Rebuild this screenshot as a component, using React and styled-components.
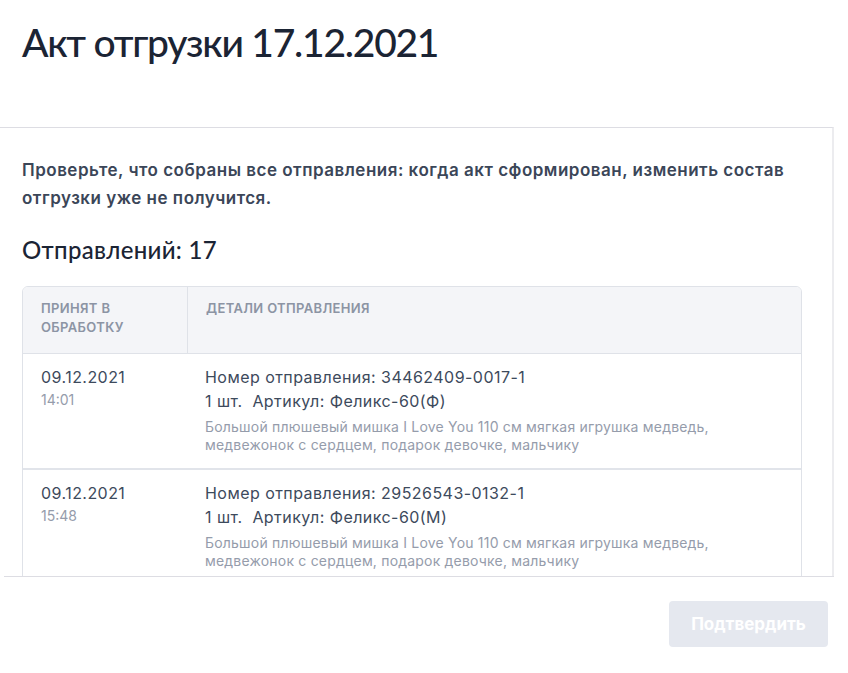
import React from "react";
import styled, { createGlobalStyle } from "styled-components";

const GlobalStyle = createGlobalStyle`
  html, body {
    margin: 0;
    padding: 0;
    background: #ffffff;
  }
  body {
    font-family: Inter, "Noto Sans", sans-serif;
    color: #3b4658;
  }
`;

const Page = styled.div`
  width: 848px;
  height: 673px;
  overflow: hidden;
  background: #fff;
`;

const Header = styled.div`
  padding: 18px 22px 0;
  height: 127px;
  box-sizing: border-box;
`;

const Title = styled.h1`
  margin: 0;
  font-family: Lato, "Noto Sans", sans-serif;
  font-weight: 500;
  font-size: 39px;
  line-height: 48px;
  color: #1b2434;
  letter-spacing: -1.25px;
`;

const ScrollBox = styled.div`
  width: 834px;
  height: 449px;
  box-sizing: border-box;
  border-top: 1px solid #dddde3;
  border-right: 2px solid #ececef;
  padding: 28px 30px 0 22px;
  overflow: hidden;
`;

const Notice = styled.p`
  margin: 0;
  font-size: 17px;
  font-weight: 600;
  line-height: 28px;
  letter-spacing: 0.5px;
  color: #3b4658;
`;

const Count = styled.h2`
  margin: 22px 0 20px;
  font-family: Lato, "Noto Sans", sans-serif;
  font-weight: 500;
  font-size: 24px;
  line-height: 32px;
  letter-spacing: 0.3px;
  color: #1b2434;
`;

const Table = styled.div`
  border: 1px solid #dfe2e8;
  border-radius: 6px;
  overflow: hidden;
`;

const Row = styled.div`
  display: grid;
  grid-template-columns: 164px 1fr;
  border-bottom: 2px solid #e1e4ea;
`;

const HeadRow = styled(Row)`
  background: #f4f5f8;
  border-bottom: 1px solid #dfe2e8;
`;

const HeadCell = styled.div`
  padding: 12px 18px 16px;
  font-size: 13px;
  font-weight: 600;
  line-height: 19px;
  letter-spacing: 0.35px;
  text-transform: uppercase;
  color: #8c94a4;
  border-left: ${({ divided }) => (divided ? "1px solid #dfe2e8" : "none")};
`;

const Cell = styled.div`
  padding: 11px 18px 14px;
`;

const Main = styled.div`
  font-size: 16px;
  line-height: 24px;
  letter-spacing: 0.45px;
  color: #3d4a5c;
`;

const Time = styled.div`
  font-size: 14px;
  line-height: 22px;
  color: #959cab;
`;

const Desc = styled.div`
  margin-top: 5px;
  font-size: 14px;
  line-height: 18px;
  letter-spacing: 0.2px;
  color: #959cab;
`;

const Footer = styled.div`
  margin: 0 14px 0 4px;
  border-top: 1px solid #dddde3;
  display: flex;
  justify-content: flex-end;
  padding: 24px 6px 0 0;
`;

const Button = styled.button`
  width: 159px;
  height: 46px;
  border: none;
  border-radius: 4px;
  background: #e5e8ef;
  color: #ffffff;
  font-family: Inter, "Noto Sans", sans-serif;
  font-size: 17px;
  font-weight: 700;
  cursor: default;
`;

const shipments = [
  {
    date: "09.12.2021",
    time: "14:01",
    number: "34462409-0017-1",
    article: "Феликс-60(Ф)",
    desc: "Большой плюшевый мишка I Love You 110 см мягкая игрушка медведь, медвежонок с сердцем, подарок девочке, мальчику",
  },
  {
    date: "09.12.2021",
    time: "15:48",
    number: "29526543-0132-1",
    article: "Феликс-60(М)",
    desc: "Большой плюшевый мишка I Love You 110 см мягкая игрушка медведь, медвежонок с сердцем, подарок девочке, мальчику",
  },
];

export default function App() {
  return (
    <Page>
      <GlobalStyle />
      <Header>
        <Title>Акт отгрузки 17.12.2021</Title>
      </Header>
      <ScrollBox>
        <Notice>
          Проверьте, что собраны все отправления: когда акт сформирован, изменить состав
          отгрузки уже не получится.
        </Notice>
        <Count>Отправлений: 17</Count>
        <Table>
          <HeadRow>
            <HeadCell>Принят в обработку</HeadCell>
            <HeadCell divided>Детали отправления</HeadCell>
          </HeadRow>
          {shipments.map((s) => (
            <Row key={s.number}>
              <Cell>
                <Main>{s.date}</Main>
                <Time>{s.time}</Time>
              </Cell>
              <Cell>
                <Main>Номер отправления: {s.number}</Main>
                <Main>1 шт.&nbsp; Артикул: {s.article}</Main>
                <Desc>{s.desc}</Desc>
              </Cell>
            </Row>
          ))}
        </Table>
      </ScrollBox>
      <Footer>
        <Button>Подтвердить</Button>
      </Footer>
    </Page>
  );
}
